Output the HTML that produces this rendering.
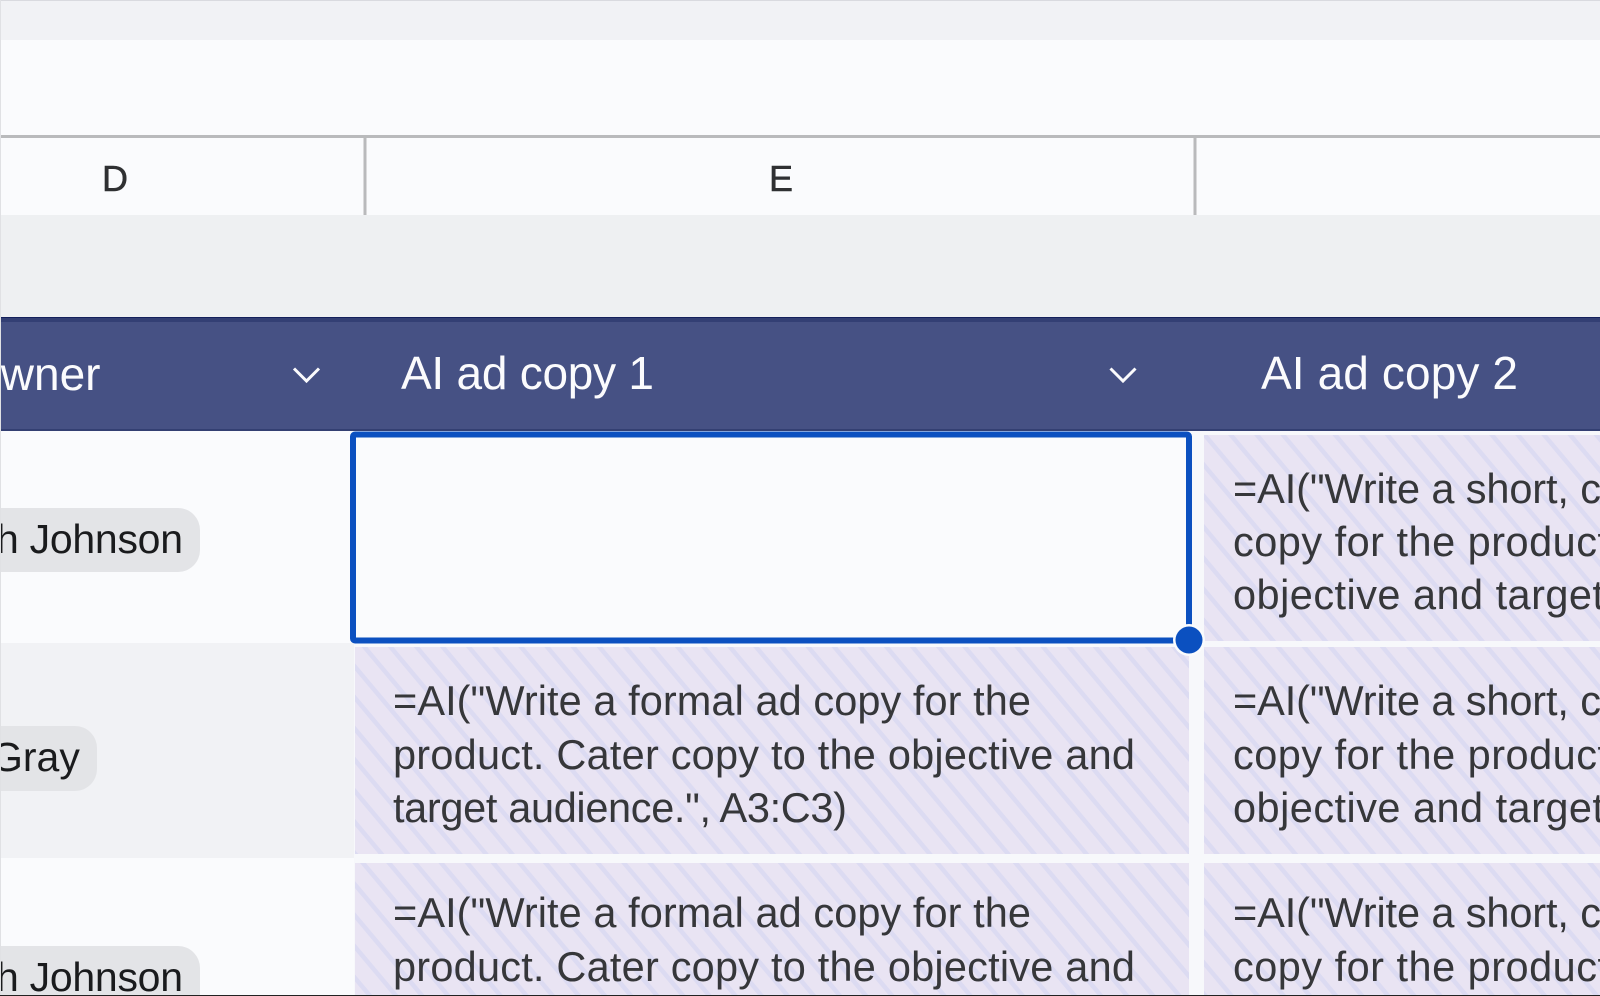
<!DOCTYPE html>
<html lang="en">
<head>
<meta charset="utf-8">
<title>AI ad copy sheet</title>
<style>
html,body{margin:0;padding:0;width:1600px;height:996px;overflow:hidden;background:#fafbfd}
svg{display:block;position:absolute;left:0;top:0}
text{font-family:"Liberation Sans",sans-serif}
.b{font-size:41.500px;fill:#36373a}
.h{font-size:46px;fill:#fbfbfd}
.c{font-size:41px;fill:#1a1b1d}
.k{font-size:36px;fill:#2f3032;stroke:#2f3032;stroke-width:.5}
</style>
</head>
<body>
<svg width="1600" height="996" viewBox="0 0 1600 996" xmlns="http://www.w3.org/2000/svg">
<defs>
<pattern id="st" width="20" height="40" patternUnits="userSpaceOnUse" patternTransform="rotate(-40 355 647)">
<rect width="20" height="40" fill="#e9e4f3"/>
<rect x="0" width="4.500" height="40" fill="#dcdbf2"/>
</pattern>
</defs>
<rect width="1600" height="996" fill="#fafbfd"/>
<rect width="1600" height="40" fill="#f1f2f5"/>
<rect width="1600" height="1" fill="#d9dadf"/>
<rect y="135" width="1600" height="3" fill="#b9babc"/>
<rect x="363.500" y="136" width="3" height="79" fill="#b9babc"/>
<rect x="1193.500" y="136" width="3" height="79" fill="#b9babc"/>
<rect y="215" width="1600" height="102" fill="#eef0f2"/>
<rect y="317" width="1600" height="114" fill="#465184"/>
<rect y="317" width="1600" height="1" fill="#14205c"/>
<rect y="318" width="1600" height="4" fill="#333f74"/>
<rect y="429" width="1600" height="2" fill="#333f72"/>
<rect y="431" width="1600" height="565" fill="#f7f8fb"/>
<rect y="431" width="351" height="212" fill="#fafbfd"/>
<rect y="643" width="354" height="215" fill="#f1f2f5"/>
<rect y="858" width="354" height="138" fill="#fafbfd"/>
<rect x="1204" y="435" width="396" height="206" fill="url(#st)"/>
<rect x="355" y="647" width="834" height="207" fill="url(#st)"/>
<rect x="1204" y="647" width="396" height="207" fill="url(#st)"/>
<rect x="355" y="863" width="834" height="133" fill="url(#st)"/>
<rect x="1204" y="863" width="396" height="133" fill="url(#st)"/>
<rect x="-40" y="508" width="240" height="64" rx="22" fill="#e3e4e7"/>
<rect x="-40" y="726" width="137" height="65" rx="22" fill="#e3e4e7"/>
<rect x="-40" y="946" width="240" height="70" rx="22" fill="#e3e4e7"/>
<text class="k" x="102" y="191">D</text>
<text class="k" x="769" y="191">E</text>
<text class="h" x="-35" y="390">Owner</text>
<text class="h" x="401" y="389" textLength="253">AI ad copy 1</text>
<text class="h" x="1261" y="389" textLength="257">AI ad copy 2</text>
<path d="M294 368.500L306.500 381L319 368.500" fill="none" stroke="#fbfbfd" stroke-width="3"/>
<path d="M1110.500 368.500L1123 381L1135.500 368.500" fill="none" stroke="#fbfbfd" stroke-width="3"/>
<text class="c" x="-4" y="553" textLength="187">h Johnson</text>
<text class="c" x="-9" y="771">Gray</text>
<text class="c" x="-4" y="991" textLength="187">h Johnson</text>
<rect x="353" y="434.500" width="836" height="206" rx="2" fill="#fafbfd" stroke="#0b50c0" stroke-width="6"/>
<circle cx="1189" cy="640" r="16" fill="#fafbfd"/>
<circle cx="1189" cy="640" r="13.500" fill="#0b50c0"/>
<text class="b" x="1233" y="503" textLength="368">=AI("Write a short, c</text>
<text class="b" x="1233" y="556" textLength="376">copy for the product</text>
<text class="b" x="1233" y="609" textLength="371">objective and target</text>
<text class="b" x="393" y="715" textLength="638">=AI("Write a formal ad copy for the</text>
<text class="b" x="393" y="769" textLength="742">product. Cater copy to the objective and</text>
<text class="b" x="393" y="822" textLength="454">target audience.", A3:C3)</text>
<text class="b" x="1233" y="715" textLength="368">=AI("Write a short, c</text>
<text class="b" x="1233" y="769" textLength="376">copy for the product</text>
<text class="b" x="1233" y="822" textLength="371">objective and target</text>
<text class="b" x="393" y="927" textLength="638">=AI("Write a formal ad copy for the</text>
<text class="b" x="393" y="981" textLength="742">product. Cater copy to the objective and</text>
<text class="b" x="1233" y="927" textLength="368">=AI("Write a short, c</text>
<text class="b" x="1233" y="981" textLength="376">copy for the product</text>
<rect y="995" width="1600" height="1" fill="#222"/>
<rect x="0" y="0" width="1" height="995" fill="#e0e1e4"/>
</svg>
</body>
</html>
